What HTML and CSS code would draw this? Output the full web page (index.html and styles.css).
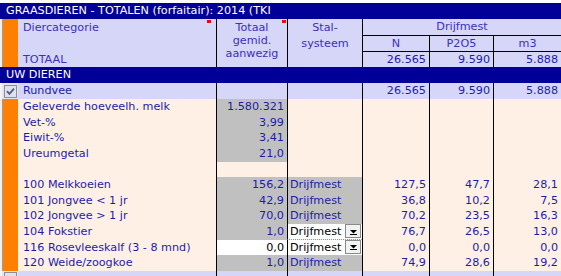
FILE: index.html
```html
<!DOCTYPE html>
<html>
<head>
<meta charset="utf-8">
<link rel="stylesheet" href="styles.css">
</head>
<body>
<div class="sheet">
  <div class="title">GRAASDIEREN - TOTALEN (forfaitair): 2014 (TKI</div>
  <div class="grid head">
    <div class="strip h-span"></div>
    <div class="orange h-span"></div>
    <div class="h-cat h-span">
      <span>Diercategorie</span>
      <span>TOTAAL</span>
      <i class="note note-cat"></i>
    </div>
    <div class="h-tot h-span line">Totaal<br>gemid.<br>aanwezig<i class="note note-tot"></i></div>
    <div class="h-stal h-span line">Stal-<br>systeem</div>
    <div class="h-drijf line">Drijfmest</div>
    <div class="h-sub line top">N</div>
    <div class="h-sub line top">P2O5</div>
    <div class="h-sub line top">m3</div>
    <div class="h-val line top">26.565</div>
    <div class="h-val line top">9.590</div>
    <div class="h-val line top">5.888</div>
  </div>
  <div class="band">UW DIEREN</div>
  <div class="grid row group">
    <div class="chk-cell">
      <svg class="chk" width="13" height="13" viewBox="0 0 13 13"><rect x="0.5" y="0.5" width="12" height="12" fill="#e2e2e6" stroke="#8c8c9c"/><path d="M3 6.2 L5.4 8.8 L10 3.6" fill="none" stroke="#4c5c8c" stroke-width="1.8"/></svg>
    </div>
    <div class="name">Rundvee</div>
    <div class="num line"></div>
    <div class="num line"></div>
    <div class="num line">26.565</div>
    <div class="num line">9.590</div>
    <div class="num line">5.888</div>
  </div>

  <div class="grid row">
    <div class="strip"></div><div class="orange"></div>
    <div class="name">Geleverde hoeveelh. melk</div>
    <div class="num line gray">1.580.321</div>
    <div class="num line"></div><div class="num line"></div><div class="num line"></div><div class="num line"></div>
  </div>
  <div class="grid row">
    <div class="strip"></div><div class="orange"></div>
    <div class="name">Vet-%</div>
    <div class="num line gray">3,99</div>
    <div class="num line"></div><div class="num line"></div><div class="num line"></div><div class="num line"></div>
  </div>
  <div class="grid row">
    <div class="strip"></div><div class="orange"></div>
    <div class="name">Eiwit-%</div>
    <div class="num line gray">3,41</div>
    <div class="num line"></div><div class="num line"></div><div class="num line"></div><div class="num line"></div>
  </div>
  <div class="grid row">
    <div class="strip"></div><div class="orange"></div>
    <div class="name">Ureumgetal</div>
    <div class="num line gray">21,0</div>
    <div class="num line"></div><div class="num line"></div><div class="num line"></div><div class="num line"></div>
  </div>
  <div class="grid row">
    <div class="strip"></div><div class="orange"></div>
    <div class="name"></div>
    <div class="num line"></div>
    <div class="num line"></div><div class="num line"></div><div class="num line"></div><div class="num line"></div>
  </div>
  <div class="grid row">
    <div class="strip"></div><div class="orange"></div>
    <div class="name">100 Melkkoeien</div>
    <div class="num line gray">156,2</div>
    <div class="txt line gray">Drijfmest</div>
    <div class="num line">127,5</div><div class="num line">47,7</div><div class="num line">28,1</div>
  </div>
  <div class="grid row">
    <div class="strip"></div><div class="orange"></div>
    <div class="name">101 Jongvee &lt; 1 jr</div>
    <div class="num line gray">42,9</div>
    <div class="txt line gray">Drijfmest</div>
    <div class="num line">36,8</div><div class="num line">10,2</div><div class="num line">7,5</div>
  </div>
  <div class="grid row">
    <div class="strip"></div><div class="orange"></div>
    <div class="name">102 Jongvee &gt; 1 jr</div>
    <div class="num line gray">70,0</div>
    <div class="txt line gray">Drijfmest</div>
    <div class="num line">70,2</div><div class="num line">23,5</div><div class="num line">16,3</div>
  </div>
  <div class="grid row">
    <div class="strip"></div><div class="orange"></div>
    <div class="name">104 Fokstier</div>
    <div class="num line gray">1,0</div>
    <div class="select line edit">
      <span>Drijfmest</span>
      <span class="dd"><svg width="7" height="5" viewBox="0 0 7 5"><path d="M0 0 H7 L3.5 3.5 Z" fill="#000"/><rect x="0" y="4" width="7" height="1" fill="#000"/></svg></span>
    </div>
    <div class="num line">76,7</div><div class="num line">26,5</div><div class="num line">13,0</div>
  </div>
  <div class="grid row">
    <div class="strip"></div><div class="orange"></div>
    <div class="name">116 Rosevleeskalf (3 - 8 mnd)</div>
    <div class="num line edit">0,0</div>
    <div class="select line edit">
      <span>Drijfmest</span>
      <span class="dd"><svg width="7" height="5" viewBox="0 0 7 5"><path d="M0 0 H7 L3.5 3.5 Z" fill="#000"/><rect x="0" y="4" width="7" height="1" fill="#000"/></svg></span>
    </div>
    <div class="num line">0,0</div><div class="num line">0,0</div><div class="num line">0,0</div>
  </div>
  <div class="grid row">
    <div class="strip"></div><div class="orange"></div>
    <div class="name">120 Weide/zoogkoe</div>
    <div class="num line gray">1,0</div>
    <div class="txt line gray">Drijfmest</div>
    <div class="num line">74,9</div><div class="num line">28,6</div><div class="num line">19,2</div>
  </div>
  <div class="grid row group">
    <div class="chk-cell">
      <svg class="chk" width="13" height="13" viewBox="0 0 13 13"><rect x="0.5" y="0.5" width="12" height="12" fill="#e2e2e6" stroke="#8c8c9c"/></svg>
    </div>
    <div class="name"></div>
    <div class="num line"></div>
    <div class="num line"></div>
    <div class="num line"></div>
    <div class="num line"></div>
    <div class="num line"></div>
  </div>
</div>
</body>
</html>
```

FILE: styles.css
```css
html, body {
  margin: 0;
  padding: 0;
  overflow: hidden;
  background: #ffffff;
}

body {
  font-family: "DejaVu Sans", Verdana, sans-serif;
  font-size: 11.2px;
  color: #1c1cac;
}

.sheet {
  width: 561px;
  padding-top: 3px;
}

.title {
  height: 16px;
  line-height: 16px;
  background: #000099;
  color: #ffffff;
  padding-left: 6px;
  white-space: nowrap;
}

.grid {
  display: grid;
  grid-template-columns: 3px 15px 198px 71px 75px 67px 64px 1fr;
}

.strip {
  background: #eeeeee;
  border-right: 1px solid #9c9c9c;
  box-sizing: border-box;
}

.orange {
  background: #ff8000;
}

.line {
  border-left: 1px solid #000000;
  box-sizing: border-box;
}

.top {
  border-top: 1px solid #000000;
}

/* header */
.head {
  grid-template-rows: 16px 16px 16px;
  background: #d6d6f8;
  color: #3a30bc;
}

.h-span {
  grid-row: 1 / 4;
}

.h-cat {
  position: relative;
  display: flex;
  flex-direction: column;
  justify-content: space-between;
  padding: 1px 0 0 5px;
  line-height: 15px;
}

.h-tot {
  position: relative;
  text-align: center;
  line-height: 13px;
  padding-top: 2px;
}

.h-stal {
  text-align: center;
  line-height: 16px;
  padding-top: 1px;
}

.h-drijf {
  grid-column: 6 / 9;
  text-align: center;
  line-height: 16px;
}

.h-sub {
  text-align: center;
  line-height: 15px;
}

.h-val {
  text-align: right;
  padding-right: 3px;
  line-height: 15px;
  color: #1c1cac;
}

.note {
  position: absolute;
  top: 1px;
  width: 4px;
  height: 3px;
  background: #ff0000;
}

.note-cat {
  right: 5px;
}

.note-tot {
  right: 1px;
}

/* band */
.band {
  height: 16px;
  line-height: 16px;
  background: #000099;
  color: #ffffff;
  padding-left: 6px;
}

/* rows */
.row {
  height: 15.64px;
  line-height: 15px;
  background: #fef0e5;
}

.row.group {
  height: 16px;
  line-height: 16px;
  background: #d6d6f8;
}

.chk-cell {
  grid-column: 1 / 3;
  background: #e4e4f4;
  border-left: 2px solid #f4f4f4;
  display: flex;
  align-items: center;
  padding-left: 2px;
}

.chk {
  display: block;
}

.name {
  padding-left: 5px;
  white-space: nowrap;
  overflow: hidden;
}

.num {
  text-align: right;
  padding-right: 3px;
  white-space: nowrap;
}

.txt {
  padding-left: 2px;
  white-space: nowrap;
}

.gray {
  background: #c0c0c0;
}

.edit {
  background: #ffffff;
  color: #000000;
  border-bottom: 1px dotted #ff8000;
}

.select {
  display: flex;
  align-items: flex-start;
  justify-content: space-between;
  padding-left: 2px;
}

.dd {
  width: 16px;
  height: 14px;
  box-sizing: border-box;
  border: 1px solid #8a8a8a;
  background: #f2f2f2;
  display: flex;
  align-items: center;
  justify-content: center;
  margin-right: 1px;
}

.dd svg {
  display: block;
  margin-top: 2px;
}
```
